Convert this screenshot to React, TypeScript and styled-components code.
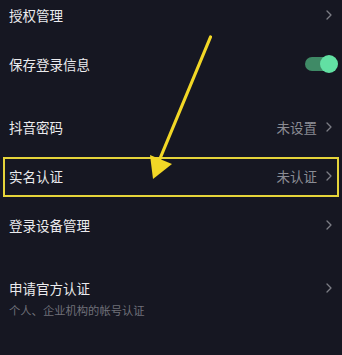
import React from "react";
import styled, { createGlobalStyle } from "styled-components";

const Global = createGlobalStyle`
  html, body { margin: 0; padding: 0; background: #161722; }
  body { font-family: "Noto Sans CJK SC", "Noto Sans", sans-serif; overflow: hidden; }
`;

const Page = styled.div`
  position: relative;
  width: 342px;
  height: 355px;
  overflow: hidden;
  background: #161722;
`;

const List = styled.div`
  display: flex;
  flex-direction: column;
  margin-top: -10px;
`;

const Gap = styled.div`
  height: 14px;
`;

const Row = styled.div<{ $tall?: boolean; $highlight?: boolean }>`
  position: relative;
  display: flex;
  align-items: center;
  justify-content: space-between;
  height: ${(p) => (p.$tall ? "71px" : "49px")};
  padding: 0 10px 0 9px;
  box-sizing: border-box;
  ${(p) =>
    p.$highlight &&
    `
    &::after {
      content: "";
      position: absolute;
      left: 3px;
      right: 3px;
      top: 5.5px;
      bottom: 3.5px;
      border: 2px solid #e6d43a;
      pointer-events: none;
    }
  `}
`;

const Texts = styled.div`
  display: flex;
  flex-direction: column;
  gap: 5px;
  width: 100%;
`;

const Head = styled.div`
  display: flex;
  align-items: center;
  justify-content: space-between;
`;

const Title = styled.div`
  color: #ebebee;
  font-size: 13.5px;
  line-height: 18px;
`;

const Sub = styled.div`
  color: #6f7079;
  font-size: 11.3px;
  line-height: 17px;
`;

const Right = styled.div`
  display: flex;
  align-items: center;
  gap: 9px;
`;

const Value = styled.span`
  color: #8b8c94;
  font-size: 13.5px;
  line-height: 18px;
`;

const Track = styled.div`
  position: relative;
  width: 30px;
  height: 14px;
  border-radius: 7px;
  background: #3f8a66;
  margin-right: -3px;
`;

const Knob = styled.div`
  position: absolute;
  right: -3px;
  top: -2px;
  width: 18px;
  height: 18px;
  border-radius: 50%;
  background: #62e0a3;
`;

const Overlay = styled.svg`
  position: absolute;
  left: 0;
  top: 0;
  pointer-events: none;
`;

const Chevron = () => (
  <svg width="6" height="10" viewBox="0 0 6 10">
    <path d="M1 1 L5 5 L1 9" fill="none" stroke="#7c7d85" strokeWidth="1.3" strokeLinecap="round" strokeLinejoin="round" />
  </svg>
);

export default function App() {
  return (
    <Page>
      <Global />
      <List>
        <Row>
          <Title>授权管理</Title>
          <Right><Chevron /></Right>
        </Row>
        <Row>
          <Title>保存登录信息</Title>
          <Track><Knob /></Track>
        </Row>
        <Gap />
        <Row>
          <Title>抖音密码</Title>
          <Right><Value>未设置</Value><Chevron /></Right>
        </Row>
        <Row $highlight>
          <Title>实名认证</Title>
          <Right><Value>未认证</Value><Chevron /></Right>
        </Row>
        <Row>
          <Title>登录设备管理</Title>
          <Right><Chevron /></Right>
        </Row>
        <Gap />
        <Row $tall>
          <Texts>
            <Head>
              <Title>申请官方认证</Title>
              <Right><Chevron /></Right>
            </Head>
            <Sub>个人、企业机构的帐号认证</Sub>
          </Texts>
        </Row>
      </List>
      <Overlay width="342" height="355" viewBox="0 0 342 355">
        <line x1="210.5" y1="37" x2="159" y2="161" stroke="#f2d726" strokeWidth="3.2" strokeLinecap="round" />
        <polygon points="150,155 172,164 153,179" fill="#f2d726" />
      </Overlay>
    </Page>
  );
}
